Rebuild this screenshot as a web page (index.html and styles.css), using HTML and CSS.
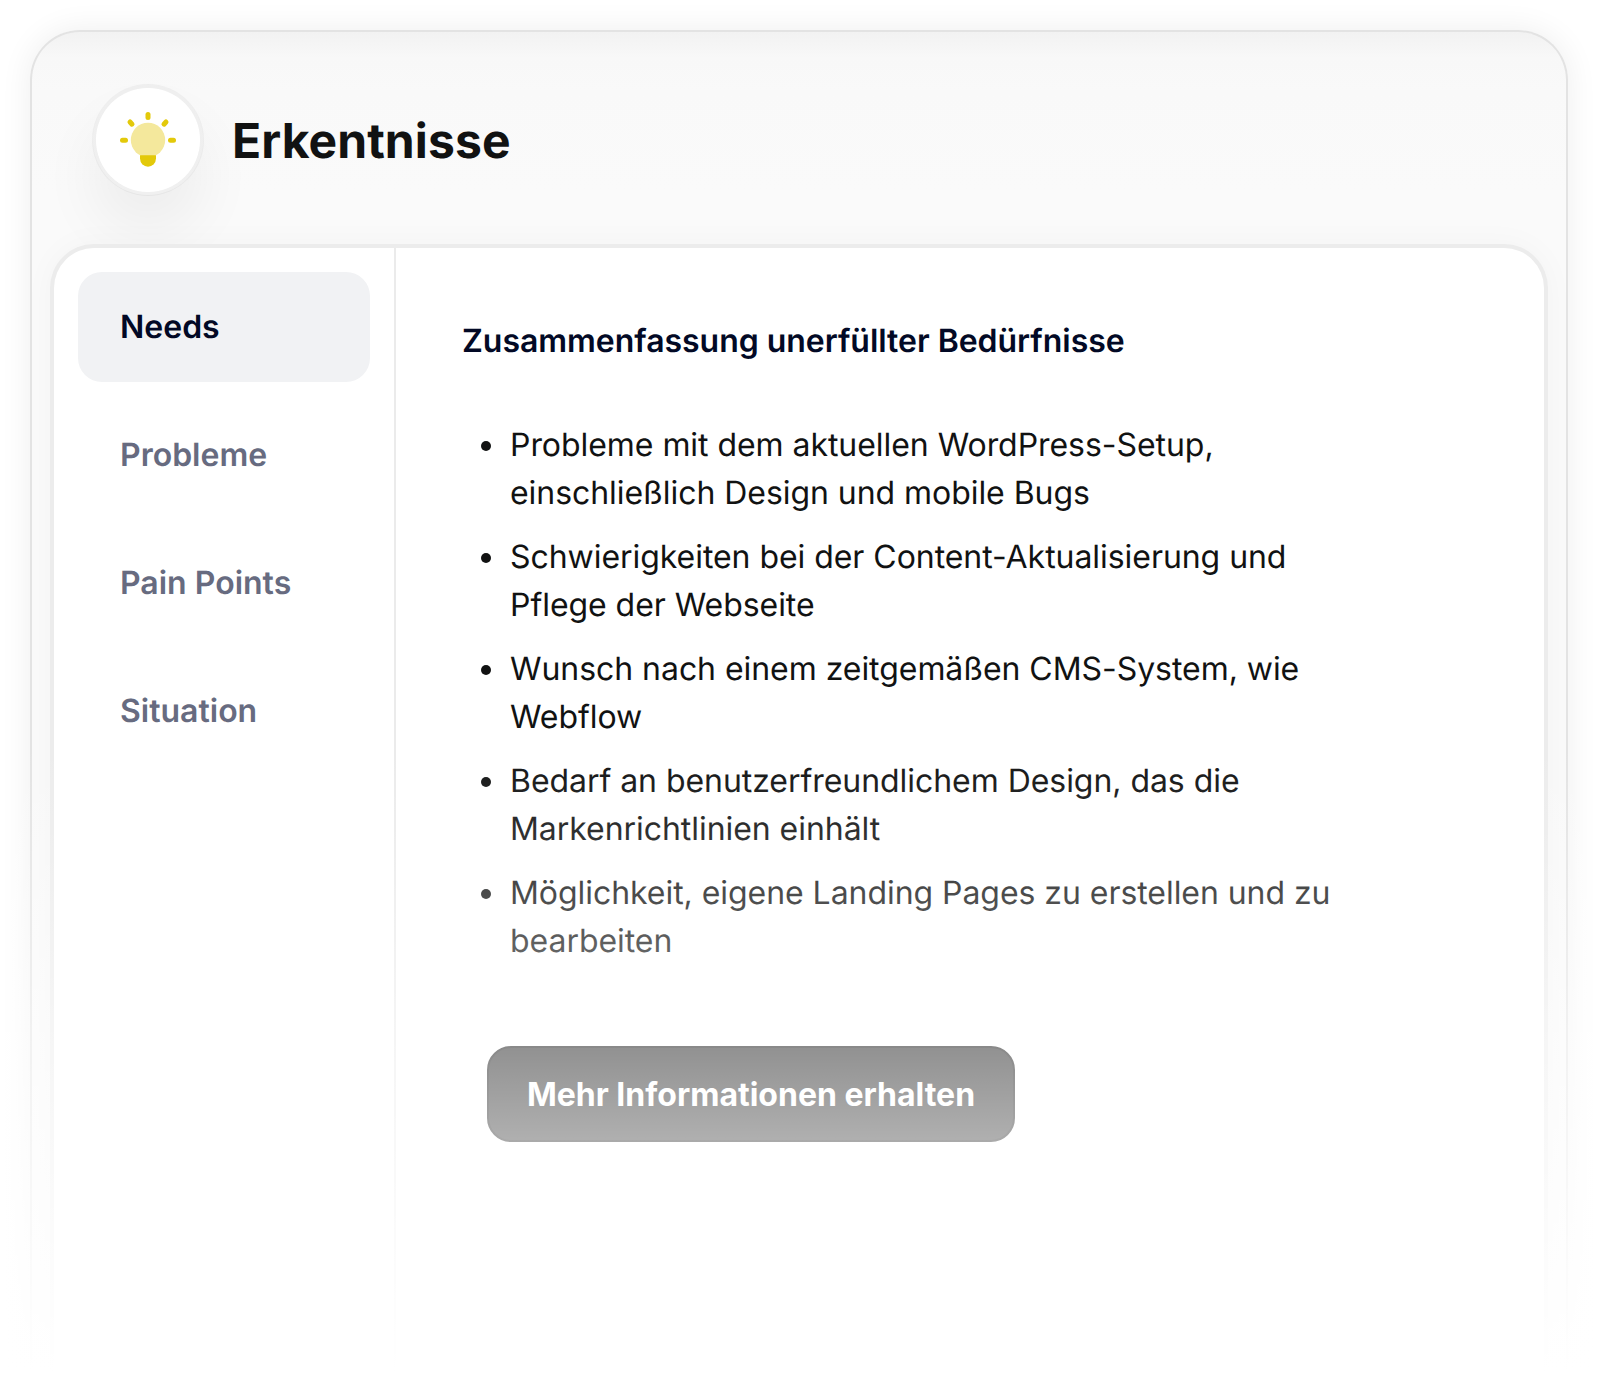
FILE: index.html
```html
<!DOCTYPE html>
<html lang="de">
<head>
  <meta charset="UTF-8" />
  <meta name="viewport" content="width=device-width, initial-scale=1.0"/>
  <title>Erkentnisse</title>
  <link rel="stylesheet" href="styles.css">
</head>
<body>
  <div class="card">
    <div class="card-header">
      <div class="icon-circle">
        <svg class="bulb" width="56" height="56" viewBox="0 0 56 56" fill="none">
          <circle cx="28" cy="28" r="17.200" fill="#f4e89c"/>
          <path d="M20 43.200h16v3a8 8.500 0 0 1-16 0z" fill="#e3c90a"/>
          <g stroke="#e3c90a" stroke-width="5" stroke-linecap="round">
            <path d="M28 2.500v3"/>
            <path d="M10 10l2 2.200"/>
            <path d="M46 10l-2 2.200"/>
            <path d="M2.500 28.200h3"/>
            <path d="M50.500 28.200h3"/>
          </g>
        </svg>
      </div>
      <h1>Erkentnisse</h1>
    </div>

    <div class="panel">
      <nav class="sidebar">
        <a class="tab active">Needs</a>
        <a class="tab">Probleme</a>
        <a class="tab">Pain Points</a>
        <a class="tab">Situation</a>
      </nav>
      <div class="content">
        <h2>Zusammenfassung unerfüllter Bedürfnisse</h2>
        <ul>
          <li>Probleme mit dem aktuellen WordPress-Setup, einschließlich Design und mobile Bugs</li>
          <li>Schwierigkeiten bei der Content-Aktualisierung und Pflege der Webseite</li>
          <li>Wunsch nach einem zeitgemäßen CMS-System, wie Webflow</li>
          <li>Bedarf an benutzerfreundlichem Design, das die Markenrichtlinien einhält</li>
          <li>Möglichkeit, eigene Landing Pages zu erstellen und zu bearbeiten</li>
        </ul>
        <button class="more-btn">Mehr Informationen erhalten</button>
      </div>
    </div>
  </div>
  <div class="fade"></div>
</body>
</html>
```
FILE: styles.css
```css
* {
  box-sizing: border-box;
}

body {
  margin: 0;
  padding: 30px 30px 0;
  height: 1378px;
  overflow: hidden;
  background: #fff;
  color: #111212;
  font-family: Inter, "Liberation Sans", sans-serif;
  font-size: 32px;
  text-rendering: geometricPrecision;
}

.card {
  height: 1348px;
  padding: 0 18px;
  border: 2px solid #e3e3e3;
  border-bottom: none;
  border-radius: 50px 50px 0 0;
  background: linear-gradient(#f2f2f2, #f8f8f8 26px, #f9f9f9 60px, #fafafa 160px);
  box-shadow: 0 0 32px rgba(0, 0, 0, 0.07);
}

.card-header {
  display: flex;
  align-items: center;
  gap: 28px;
  height: 212px;
  padding: 4px 42px 0;
}

.icon-circle {
  display: flex;
  justify-content: center;
  align-items: center;
  width: 112px;
  height: 112px;
  border: 4px solid rgba(0, 0, 0, 0.04);
  border-radius: 50%;
  background: #fff;
  background-clip: padding-box;
  box-shadow: 0 36px 60px rgba(0, 0, 0, 0.055);
}

h1 {
  margin: 2px 0 0;
  font-size: 48px;
  font-weight: 700;
  line-height: 60px;
  letter-spacing: 0.1px;
}

.panel {
  position: relative;
  display: flex;
  height: 1134px;
  border: 4px solid #ececec;
  border-bottom: none;
  border-radius: 44px 44px 0 0;
  background: #fff;
  box-shadow: 0 0 32px rgba(0, 0, 0, 0.03);
}

.sidebar {
  display: flex;
  flex-direction: column;
  gap: 18px;
  width: 342px;
  padding: 24px;
  border-right: 2px solid #ebebeb;
}

.tab {
  height: 110px;
  padding-left: 42px;
  border-radius: 24px;
  color: #676b80;
  font-weight: 600;
  line-height: 110px;
}

.tab.active {
  background: #f1f2f4;
  color: #020925;
}

.content {
  padding: 69px 66px 0;
}

h2 {
  margin: 0;
  color: #020925;
  font-size: 32px;
  font-weight: 600;
  line-height: 48px;
  letter-spacing: -0.03px;
}

ul {
  width: 880px;
  margin: 56px 0 0;
  padding-left: 48px;
  list-style: none;
}

li {
  margin-bottom: 16px;
  line-height: 48px;
  letter-spacing: -0.05px;
}

li::before {
  content: "";
  float: left;
  width: 10px;
  height: 10px;
  margin: 20px 0 0 -29px;
  border-radius: 50%;
  background: #111212;
}

.more-btn {
  display: block;
  width: 528px;
  height: 96px;
  margin: 81px 0 0 25px;
  border: 2px solid #050505;
  border-radius: 24px;
  background: #161616;
  color: #fff;
  font-family: inherit;
  font-size: 32px;
  font-weight: 700;
}

/* fades the lower part of the card into the page */
.fade {
  position: absolute;
  left: 0;
  top: 740px;
  width: 100%;
  height: 638px;
  background: linear-gradient(
    rgba(255, 255, 255, 0),
    rgba(255, 255, 255, 0.05) 40px,
    rgba(255, 255, 255, 0.12) 90px,
    rgba(255, 255, 255, 0.235) 150px,
    rgba(255, 255, 255, 0.32) 200px,
    rgba(255, 255, 255, 0.53) 307px,
    rgba(255, 255, 255, 0.66) 400px,
    rgba(255, 255, 255, 0.81) 500px,
    #fff 632px
  );
}
```
